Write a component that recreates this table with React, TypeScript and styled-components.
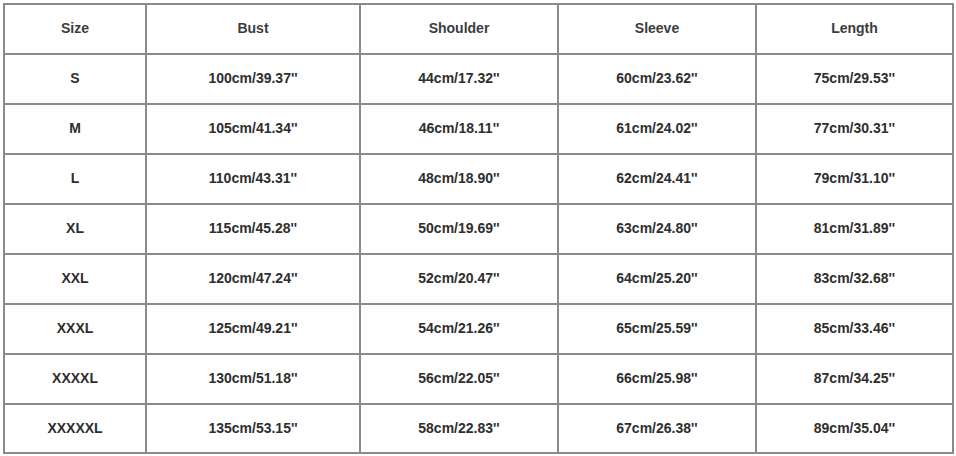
import React from 'react'
import styled, { createGlobalStyle } from 'styled-components'

const GlobalStyle = createGlobalStyle`
  html, body {
    margin: 0;
    padding: 0;
    background: #ffffff;
  }
  body {
    width: 956px;
    height: 456px;
    overflow: hidden;
    font-family: "Liberation Sans", Arial, sans-serif;
  }
`

const Page = styled.div`
  padding: 3px 0 0 3px;
`

const Table = styled.div`
  display: grid;
  grid-template-columns: 140px 212px 196px 196px 195px;
  grid-template-rows: repeat(8, 48px) 47px;
  gap: 2px;
  padding: 2px;
  width: fit-content;
  background: #8a8a8a;
`

const Cell = styled.div<{ $head?: boolean }>`
  display: flex;
  align-items: center;
  justify-content: center;
  background: #ffffff;
  color: ${(p) => (p.$head ? '#3c3c3c' : '#2e2e2e')};
  font-size: 14px;
  font-weight: 700;
  padding-bottom: ${(p) => (p.$head ? '3px' : '2px')};
`

const headers = ['Size', 'Bust', 'Shoulder', 'Sleeve', 'Length']

const rows = [
  ['S', '100cm/39.37\'\'', '44cm/17.32\'\'', '60cm/23.62\'\'', '75cm/29.53\'\''],
  ['M', '105cm/41.34\'\'', '46cm/18.11\'\'', '61cm/24.02\'\'', '77cm/30.31\'\''],
  ['L', '110cm/43.31\'\'', '48cm/18.90\'\'', '62cm/24.41\'\'', '79cm/31.10\'\''],
  ['XL', '115cm/45.28\'\'', '50cm/19.69\'\'', '63cm/24.80\'\'', '81cm/31.89\'\''],
  ['XXL', '120cm/47.24\'\'', '52cm/20.47\'\'', '64cm/25.20\'\'', '83cm/32.68\'\''],
  ['XXXL', '125cm/49.21\'\'', '54cm/21.26\'\'', '65cm/25.59\'\'', '85cm/33.46\'\''],
  ['XXXXL', '130cm/51.18\'\'', '56cm/22.05\'\'', '66cm/25.98\'\'', '87cm/34.25\'\''],
  ['XXXXXL', '135cm/53.15\'\'', '58cm/22.83\'\'', '67cm/26.38\'\'', '89cm/35.04\'\''],
]

const App = () => (
  <>
    <GlobalStyle />
    <Page>
      <Table>
        {headers.map((h) => (
          <Cell key={h} $head>
            {h}
          </Cell>
        ))}
        {rows.map((r) =>
          r.map((v, i) => <Cell key={r[0] + i}>{v}</Cell>)
        )}
      </Table>
    </Page>
  </>
)

export default App
